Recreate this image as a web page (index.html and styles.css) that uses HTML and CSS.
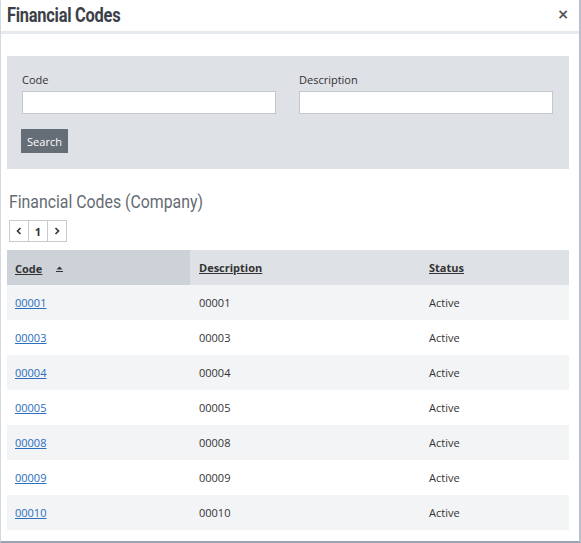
FILE: index.html
```html
<!DOCTYPE html>
<html>
<head>
<meta charset="utf-8">
<link rel="stylesheet" href="styles.css">
</head>
<body>
<div class="dialog">
  <div class="dlg-header">
    <h1 class="dlg-title">Financial Codes</h1>
    <span class="dlg-close">×</span>
  </div>
  <div class="dlg-body">
    <div class="search-panel">
      <div class="fields">
        <div class="field">
          <label class="field-label">Code</label>
          <input class="field-input" type="text">
        </div>
        <div class="field">
          <label class="field-label">Description</label>
          <input class="field-input" type="text">
        </div>
      </div>
      <button class="btn-search">Search</button>
    </div>
    <h2 class="section-title">Financial Codes (Company)</h2>
    <div class="pager">
      <span class="pg-cell"><svg width="6" height="8" viewBox="0 0 6 8"><path d="M4.5 1 L1.5 4 L4.5 7" fill="none" stroke="#333" stroke-width="1.6"/></svg></span>
      <span class="pg-cell pg-num">1</span>
      <span class="pg-cell"><svg width="6" height="8" viewBox="0 0 6 8"><path d="M1.5 1 L4.5 4 L1.5 7" fill="none" stroke="#333" stroke-width="1.6"/></svg></span>
    </div>
    <table class="grid">
      <colgroup><col class="c1"><col class="c2"><col class="c3"></colgroup>
      <thead>
        <tr>
          <th class="sorted"><a class="th-link">Code</a><span class="sort-icon"><svg width="7" height="6" viewBox="0 0 7 6"><path d="M0.5 3.5 L3.5 0.5 L6.5 3.5 Z" fill="#333"/><rect x="0" y="5" width="7" height="1" fill="#333"/></svg></span></th>
          <th><a class="th-link">Description</a></th>
          <th><a class="th-link">Status</a></th>
        </tr>
      </thead>
      <tbody>
        <tr><td><a class="code-link">00001</a></td><td>00001</td><td>Active</td></tr>
        <tr><td><a class="code-link">00003</a></td><td>00003</td><td>Active</td></tr>
        <tr><td><a class="code-link">00004</a></td><td>00004</td><td>Active</td></tr>
        <tr><td><a class="code-link">00005</a></td><td>00005</td><td>Active</td></tr>
        <tr><td><a class="code-link">00008</a></td><td>00008</td><td>Active</td></tr>
        <tr><td><a class="code-link">00009</a></td><td>00009</td><td>Active</td></tr>
        <tr><td><a class="code-link">00010</a></td><td>00010</td><td>Active</td></tr>
      </tbody>
    </table>
  </div>
</div>
</body>
</html>
```
FILE: styles.css
```css
html, body {
  margin: 0;
  padding: 0;
  background: #fff;
}
body {
  font-family: "Open Sans", "Noto Sans", sans-serif;
  font-size: 11px;
  color: #333;
}
.dialog {
  box-sizing: border-box;
  width: 581px;
  height: 543px;
  border-left: 1px solid #d4d9e0;
  border-right: 2px solid #b9c1cc;
  border-bottom: 2px solid #9aa5b4;
  background: #fff;
}
.dlg-header {
  height: 31px;
  border-bottom: 3px solid #e6e9ed;
  display: flex;
  align-items: center;
  justify-content: space-between;
  padding: 0 10px 0 6px;
}
.dlg-title {
  margin: -2px 0 0 0;
  font-family: "Roboto", sans-serif;
  font-weight: 700;
  font-size: 20px;
  letter-spacing: -0.3px;
  color: #3b4048;
  transform: scaleX(0.82);
  transform-origin: left center;
}
.dlg-close {
  font-family: "DejaVu Sans", sans-serif;
  font-size: 14px;
  font-weight: 700;
  color: #555;
  margin-top: -3px;
}
.dlg-body {
  padding: 22px 10px 0 6px;
}
.search-panel {
  background: #dee1e6;
  padding: 17px 16px 17px 15px;
  height: 113px;
  box-sizing: border-box;
}
.fields {
  display: grid;
  grid-template-columns: 1fr 1fr;
  column-gap: 23px;
}
.field {
  display: flex;
  flex-direction: column;
}
.field-label {
  font-size: 11px;
  color: #333;
  line-height: 14px;
  margin-bottom: 4px;
}
.field-input {
  box-sizing: border-box;
  height: 23px;
  border: 1px solid #c4c8cd;
  background: #fff;
  margin: 0;
  padding: 0 4px;
}
.btn-search {
  margin-top: 15px;
  margin-left: -1px;
  height: 24px;
  width: 47px;
  border: none;
  background: #656d76;
  color: #fff;
  font-family: "Open Sans", sans-serif;
  font-size: 11px;
  padding: 0;
}
.section-title {
  margin: 21px 0 0 2px;
  font-family: "Roboto", sans-serif;
  font-weight: 400;
  font-size: 18px;
  line-height: 24px;
  color: #666b72;
  transform: scaleX(0.88);
  transform-origin: left center;
}
.pager {
  display: inline-flex;
  margin: 6px 0 0 2px;
  border: 1px solid #c7cbd0;
  height: 20px;
}
.pg-cell {
  width: 18px;
  display: flex;
  align-items: center;
  justify-content: center;
  border-left: 1px solid #c7cbd0;
  font-size: 11px;
  font-weight: 700;
  color: #333;
}
.pg-cell:first-child {
  border-left: none;
}
.grid {
  margin-top: 8px;
  width: 562px;
  border-collapse: collapse;
  table-layout: fixed;
}
.c1 { width: 183px; }
.c2 { width: 231px; }
.c3 { width: 148px; }
.grid th {
  background: #dee1e6;
  height: 35px;
  text-align: left;
  padding: 0 8px;
  font-weight: 700;
  font-size: 11px;
}
.grid th:nth-child(2) {
  padding-left: 9px;
}
.grid td:nth-child(2) {
  padding-left: 9px;
}
.grid th.sorted {
  background: #cdd2d9;
}
.th-link {
  color: #333;
  text-decoration: underline;
}
.sort-icon {
  display: inline-block;
  margin-left: 14px;
  vertical-align: 1px;
}
.grid td {
  height: 35px;
  padding: 0 8px;
  font-size: 11px;
  color: #333;
}
.grid tbody tr:nth-child(odd) td {
  background: #f3f4f6;
}
.code-link {
  color: #2a6ebd;
  text-decoration: underline;
}
```
